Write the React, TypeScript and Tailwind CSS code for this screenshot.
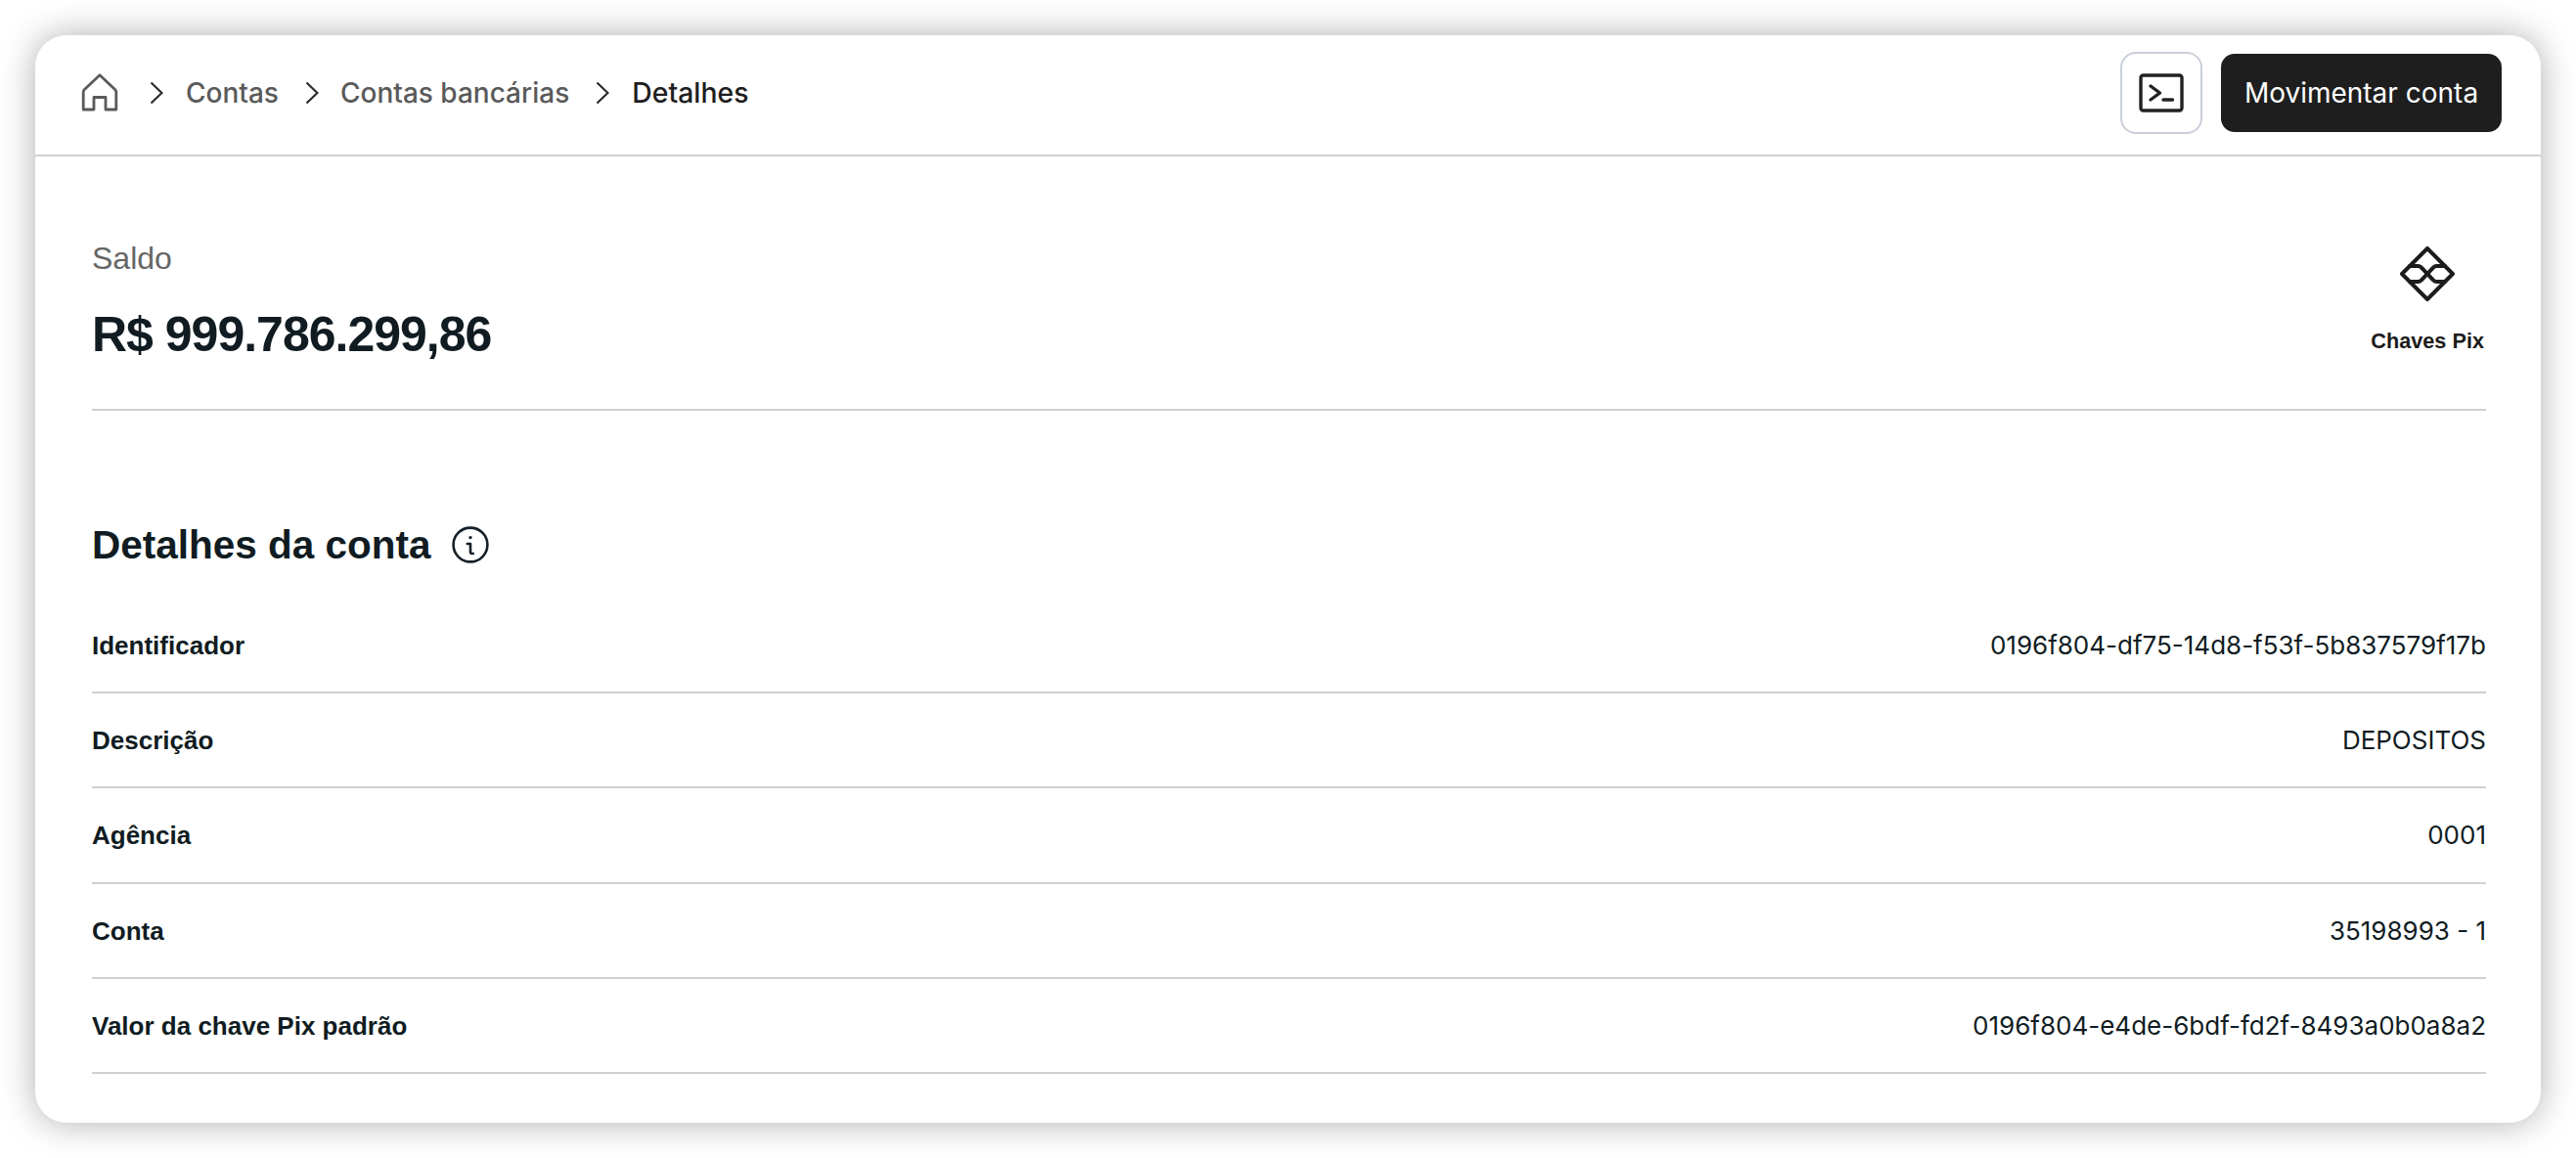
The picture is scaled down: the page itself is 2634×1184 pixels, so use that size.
import React from "react";

const rows = [
  { label: "Identificador", value: "0196f804-df75-14d8-f53f-5b837579f17b" },
  { label: "Descrição", value: "DEPOSITOS" },
  { label: "Agência", value: "0001" },
  { label: "Conta", value: "35198993 - 1" },
  { label: "Valor da chave Pix padrão", value: "0196f804-e4de-6bdf-fd2f-8493a0b0a8a2" },
];

const Chevron = () => (
  <svg width="14" height="24" viewBox="0 0 14 24" fill="none" stroke="#2a2a2a" strokeWidth="2.2" className="shrink-0">
    <path d="M1.5 1.5 12.5 12 1.5 22.5" />
  </svg>
);

const HomeIcon = () => (
  <svg width="38" height="39" viewBox="0 0 38 39" fill="none" stroke="#5a5a5a" strokeWidth="2.8" strokeLinejoin="round" className="shrink-0">
    <path d="M19 1.8 3.4 16.5c-.8.8-1.2 1.7-1.2 2.8V37H13V24.5h12V37h10.8V19.3c0-1.1-.4-2-1.2-2.8L19 1.8Z" />
  </svg>
);

const TerminalIcon = () => (
  <svg width="46" height="40" viewBox="0 0 46 40" fill="none" stroke="#222222" strokeWidth="3.4" strokeLinecap="round" strokeLinejoin="round">
    <rect x="2" y="2" width="42" height="36" rx="2.5" />
    <path d="M12 13 21.5 20 12 27" />
    <path d="M25 27H34.5" />
  </svg>
);

const PixIcon = () => (
  <svg width="56" height="56" viewBox="0 0 56 56" fill="none" stroke="#1c1c1c" strokeWidth="4" strokeLinecap="round" strokeLinejoin="round">
    <path d="M28 2 54 28 28 54 2 28Z" />
    <path d="M10 20H18.5C20 20 21 20.6 22 21.6L34 34.4C35 35.4 36 36 37.5 36H46" />
    <path d="M10 36H18.5C20 36 21 35.4 22 34.4L34 21.6C35 20.6 36 20 37.5 20H46" />
  </svg>
);

const InfoIcon = () => (
  <svg width="38" height="38" viewBox="0 0 38 38" fill="none" stroke="#14202a" strokeWidth="2.6" strokeLinecap="round" strokeLinejoin="round" className="shrink-0">
    <circle cx="19" cy="19" r="17.4" />
    <circle cx="19" cy="11.6" r="1.7" fill="#14202a" stroke="none" />
    <path d="M15.8 18H19V26.4C19 27.4 19.6 28 21.8 28" />
  </svg>
);

export default function App() {
  return (
    <div className="w-full min-h-screen bg-white p-[36px] font-['Liberation_Sans',sans-serif] text-[#101c22]">
      <div className="h-[1112px] rounded-[32px] bg-white shadow-[0_0_36px_rgba(0,0,0,0.32)]">
        {/* breadcrumb + acoes */}
        <header className="h-[124px] flex items-center justify-between pb-[4px] pl-[47px] pr-[40px] border-b-2 border-[#d0d0d0]">
          <nav className="flex items-center font-['Inter',sans-serif] text-[28px] font-medium text-[#5a5a5a]">
            <HomeIcon />
            <span className="ml-[32px]"><Chevron /></span>
            <span className="ml-[23px]">Contas</span>
            <span className="ml-[27px]"><Chevron /></span>
            <span className="ml-[22px]">Contas bancárias</span>
            <span className="ml-[27px]"><Chevron /></span>
            <span className="ml-[23px] text-[28.4px] text-[#1e1e1e]">Detalhes</span>
          </nav>
          <div className="flex items-center gap-[19px]">
            <button className="w-[84px] h-[84px] flex items-center justify-center rounded-[16px] border-2 border-[#c9ced9] bg-white">
              <TerminalIcon />
            </button>
            <button className="w-[287px] h-[80px] rounded-[14px] bg-[#1e1e1e] text-white font-['Inter',sans-serif] text-[28px]">
              Movimentar conta
            </button>
          </div>
        </header>

        <main className="pl-[58px] pr-[56px]">
          <section className="flex justify-between border-b-2 border-[#d0d0d0] pt-[84px] pb-[48px]">
            <div>
              <p className="text-[32px] leading-[40px] text-[#666666]">Saldo</p>
              <p className="mt-[30px] text-[50px] leading-[56px] font-bold tracking-[-1px]">R$ 999.786.299,86</p>
            </div>
            <div className="flex flex-col items-center pt-[8px] pr-[2px]">
              <PixIcon />
              <span className="mt-[27px] text-[21.7px] leading-[28px] font-bold text-[#1c1c1c]">Chaves Pix</span>
            </div>
          </section>

          <div className="mt-[113px] flex items-center gap-[21px]">
            <h2 className="text-[40.5px] leading-[48px] font-bold">Detalhes da conta</h2>
            <InfoIcon />
          </div>

          <div className="mt-[30.75px]">
            {rows.map((row) => (
              <div key={row.label} className="h-[97.25px] flex items-center justify-between border-b-2 border-[#d0d0d0]">
                <span className="pt-[2px] text-[26px] font-bold">{row.label}</span>
                <span className="font-['Inter',sans-serif] text-[26px]">{row.value}</span>
              </div>
            ))}
          </div>
        </main>
      </div>
    </div>
  );
}
